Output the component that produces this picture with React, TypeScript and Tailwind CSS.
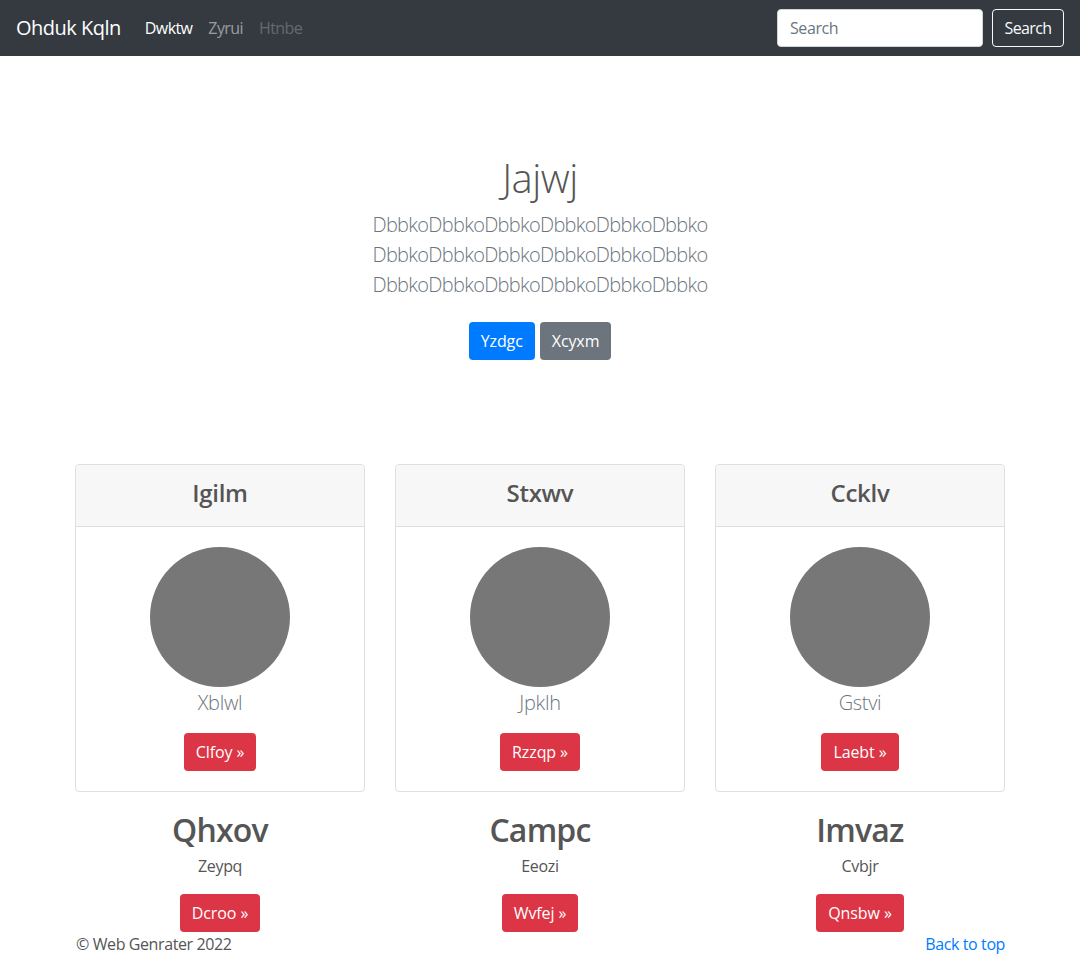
import React from "react";

const font = { fontFamily: '"Open Sans", "Noto Sans", sans-serif' };

function Card({ title, name, btn }: { title: string; name: string; btn: string }) {
  return (
    <div className="rounded border border-[#dfdfdf] bg-white">
      <div className="h-[62px] flex items-center justify-center pb-[6px] bg-[#f7f7f7] border-b border-[#dfdfdf] rounded-t">
        <h4 className="text-[24px] leading-[29px] font-semibold text-[#555] tracking-[-0.3px]">{title}</h4>
      </div>
      <div className="flex flex-col items-center pt-5 pb-5">
        <div className="w-[140px] h-[140px] rounded-full bg-[#777]" />
        <p className="text-[20px] leading-[30px] font-light text-[#6c757d] mt-[1px] tracking-[-0.3px]">{name}</p>
        <button className="mt-[15px] h-[38px] px-3 rounded bg-[#dc3545] text-white text-[16px] leading-6 tracking-[-0.1px]">
          {btn} »
        </button>
      </div>
    </div>
  );
}

function Below({ title, sub, btn }: { title: string; sub: string; btn: string }) {
  return (
    <div className="flex flex-col items-center">
      <h2 className="mt-[19px] text-[32px] leading-[38px] font-semibold text-[#555] tracking-[-0.8px]">{title}</h2>
      <p className="mt-[5px] text-[16px] leading-6 text-[#555] tracking-[-0.3px]">{sub}</p>
      <button className="mt-[16px] h-[38px] px-3 rounded bg-[#dc3545] text-white text-[16px] leading-6 tracking-[-0.1px]">
        {btn} »
      </button>
    </div>
  );
}

export default function App() {
  return (
    <div style={font} className="bg-white min-h-[956px] text-[#555]">
      <nav className="h-14 bg-[#343a40] flex items-center px-4">
        <span className="text-white text-[20px] leading-[30px] mr-4 tracking-[-0.5px]">Ohduk Kqln</span>
        <a className="px-2 text-white text-[16px] tracking-[-0.6px]">Dwktw</a>
        <a className="px-2 text-white/50 text-[16px] tracking-[-0.6px]">Zyrui</a>
        <a className="px-2 text-white/25 text-[16px] tracking-[-0.6px]">Htnbe</a>
        <div className="ml-auto flex items-center">
          <input
            placeholder="Search"
            className="w-[206px] h-[38px] rounded bg-white border border-[#ced4da] px-3 text-[16px] placeholder-[#6c757d] outline-none tracking-[-0.4px]"
          />
          <button className="ml-[9px] w-[72px] h-[38px] rounded border border-[#f8f9fa] text-[#f8f9fa] text-[16px] tracking-[-0.6px]">
            Search
          </button>
        </div>
      </nav>

      <section className="flex flex-col items-center pt-[98px] pb-[104px]">
        <h1 className="text-[40px] leading-[48px] font-light text-[#555] tracking-[-0.5px]">Jajwj</h1>
        <p className="mt-[8px] text-[20px] leading-[30px] font-light text-[#6c757d] text-center tracking-[-0.7px]">
          DbbkoDbbkoDbbkoDbbkoDbbkoDbbko
          <br />
          DbbkoDbbkoDbbkoDbbkoDbbkoDbbko
          <br />
          DbbkoDbbkoDbbkoDbbkoDbbkoDbbko
        </p>
        <div className="mt-[22px] flex gap-[5px]">
          <button className="h-[38px] px-3 rounded bg-[#007bff] text-white text-[16px] tracking-[-0.1px]">Yzdgc</button>
          <button className="h-[38px] px-3 rounded bg-[#6c757d] text-white text-[16px] tracking-[-0.1px]">Xcyxm</button>
        </div>
      </section>

      <div className="w-[960px] mx-auto px-[15px]">
        <div className="grid grid-cols-3 gap-x-[30px]">
          <Card title="Igilm" name="Xblwl" btn="Clfoy" />
          <Card title="Stxwv" name="Jpklh" btn="Rzzqp" />
          <Card title="Ccklv" name="Gstvi" btn="Laebt" />
          <Below title="Qhxov" sub="Zeypq" btn="Dcroo" />
          <Below title="Campc" sub="Eeozi" btn="Wvfej" />
          <Below title="Imvaz" sub="Cvbjr" btn="Qnsbw" />
        </div>
        <div className="flex justify-between text-[16px] leading-6 tracking-[-0.4px]">
          <span className="pl-px text-[#555]">© Web Genrater 2022</span>
          <a className="text-[#007bff]">Back to top</a>
        </div>
      </div>
    </div>
  );
}
